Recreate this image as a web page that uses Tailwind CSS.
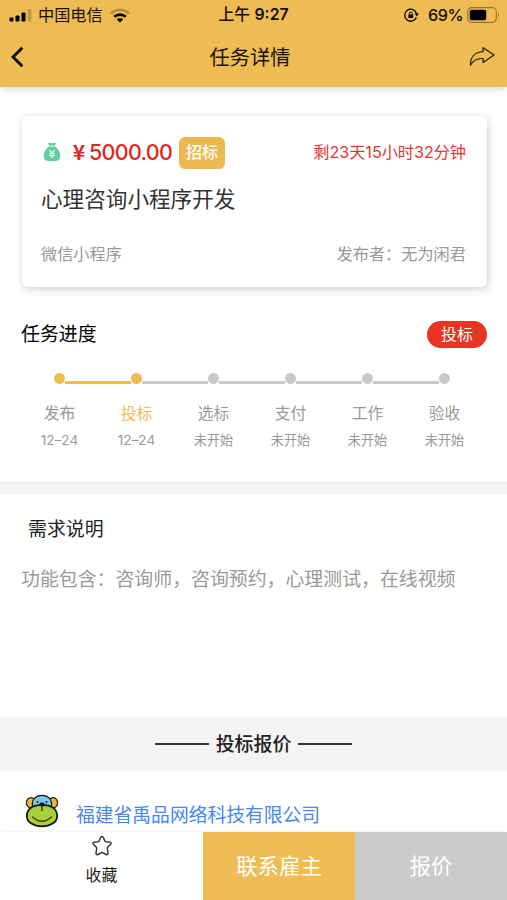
<!DOCTYPE html>
<html lang="zh-CN">
<head>
<meta charset="utf-8">
<title>任务详情</title>
<script src="https://cdn.jsdelivr.net/npm/@tailwindcss/browser@4"></script>
</head>
<body class="w-[507px] h-[900px] overflow-hidden bg-white font-['Inter','Noto_Sans_CJK_SC',sans-serif] text-[#222]">
<div class="flex flex-col h-[900px]">
  <header class="h-[87px] shrink-0 bg-[#efbc54] shadow-[0_2px_7px_rgba(0,0,0,0.16)] text-[#151005]">
    <div class="h-[30px] grid grid-cols-3 items-center leading-[30px]">
      <div class="flex items-center pl-[9px]">
        <svg class="w-[24px] h-[13px]" viewBox="0 0 24 13"><g fill="#000"><rect x="0.5" y="8.5" width="4" height="4" rx="1"/><rect x="6.5" y="6.5" width="4" height="6" rx="1"/><rect x="12.5" y="3.5" width="4" height="9" rx="1"/><rect x="18.5" y="0" width="4" height="12.5" rx="1" opacity=".2"/></g></svg>
        <span class="ml-[5px] text-[16.2px] h-[30px] whitespace-nowrap">中国电信</span>
        <svg class="ml-[7px] w-[20px] h-[15px]" viewBox="0 0 20 15" fill="none" stroke="#000" stroke-width="2.8"><path d="M1.2 5.4C6 .6 14 .6 18.8 5.4" opacity=".25"/><path d="M4.2 8.8C7.4 5.8 12.6 5.8 15.8 8.8"/><path d="M10 14.4 6.6 11.3C8.6 9.9 11.4 9.9 13.4 11.3Z" fill="#000" stroke="none"/></svg>
      </div>
      <div class="text-center text-[15.8px] h-[30px] whitespace-nowrap"><span class="font-medium">上午</span> <span class="font-semibold">9:27</span></div>
      <div class="flex items-center justify-end pr-[7px]">
        <svg class="w-[15px] h-[14px]" viewBox="0 0 15 14" fill="none" stroke="#000" stroke-width="1.3"><path d="M12.3 5A6 6 0 1 0 12.3 9.400"/><path d="M10.600 5.200h4.200l-2 3.400z" fill="#000" stroke="none"/><rect x="4.400" y="6.400" width="4.800" height="3.600" rx=".6" fill="#000" stroke="none"/><path d="M5.400 6.700V5.400a1.400 1.400 0 0 1 2.800 0v1.300" stroke-width="1"/></svg>
        <span class="ml-[9px] text-[16.2px] font-medium h-[30px] tracking-[-0.5px]">69%</span>
        <svg class="ml-[4px] w-[33px] h-[16px]" viewBox="0 0 33 16"><rect x=".7" y=".7" width="28.6" height="14.6" rx="4" fill="none" stroke="#000" stroke-opacity=".38" stroke-width="1.2"/><rect x="2.7" y="2.8" width="16.5" height="10.4" rx="2" fill="#000"/><path d="M31 5.5q2 2.5 0 5z" fill="#000" opacity=".4"/></svg>
      </div>
    </div>
    <div class="h-[54px] grid grid-cols-[1fr_auto_1fr] items-center pl-[11px] pr-[18px]">
      <svg class="w-[26px] h-[22px] -ml-px" viewBox="0 0 26 22" fill="none" stroke="#000" stroke-width="2.8"><path d="M12.300 1.800 3 11l9.300 9.200"/></svg>
      <h1 class="text-[20.2px] leading-[56px] h-[54px]">任务详情</h1>
      <svg class="w-[26px] h-[22px] justify-self-end -mr-[6px]" viewBox="0 0 26 22" fill="none" stroke="#231a05" stroke-width="1.2" stroke-linejoin="round"><path d="M14.1 1.7 25 8.9 14.1 16.6V12.6C8.2 12 4.5 14.2 1.4 19.2 1.3 11.4 5.7 6 14.1 5.6Z"/></svg>
    </div>
  </header>

  <section class="mt-[29px] ml-[22px] w-[465px] h-[171px] shrink-0 rounded-[6px] bg-white shadow-[1px_2px_8px_rgba(0,0,0,0.2)] pl-[19px] pr-[21px] pt-[19px]">
    <div class="h-[34px] flex items-center">
      <svg class="ml-[2px] w-[18px] h-[20px]" viewBox="0 0 18 20"><path d="M5 1.2Q7 .1 9 1.2 11 .1 13 1.2L11.8 3.4H6.2Z" fill="#5fcf9d"/><path d="M6.1 4.6H11.9C16 7.4 17.4 11 17.2 14.5 17 18 15.2 19.2 9 19.2S1 18 .8 14.5C.6 11 2 7.4 6.1 4.6Z" fill="#5fcf9d"/><path d="M6.5 8.2 9 11.4 11.5 8.2M9 11.4V16M6.3 11.6H11.7M6.3 13.7H11.7" stroke="#e9fff5" stroke-width="1.3" fill="none"/></svg>
      <div class="ml-[11px] flex items-center h-[34px] text-[#e2281e] font-medium"><span class="w-[14px] h-[34px] leading-[32px] text-center text-[21px] font-bold font-['Noto_Sans_CJK_SC',sans-serif]">¥</span><span class="ml-[3px] w-[83px] text-[21.5px] h-[34px] leading-[34px] whitespace-nowrap tracking-[-0.7px]">5000.00</span></div>
      <span class="ml-[7px] mt-px w-[46px] h-[32px] leading-[31px] rounded-[6px] bg-[#edb850] text-center text-[16px] text-white font-medium">招标</span>
      <span class="ml-auto h-[34px] leading-[34px] text-[16.2px] tracking-[-0.05px] text-[#e2382f]">剩23天15小时32分钟</span>
    </div>
    <h2 class="mt-[12px] h-[36px] leading-[36px] text-[21.6px] text-[#333]">心理咨询小程序开发</h2>
    <div class="mt-[22px] h-[30px] leading-[30px] flex justify-between text-[16.2px] text-[#999]"><span>微信小程序</span><span>发布者：无为闲君</span></div>
  </section>

  <section class="shrink-0 h-[194px] pt-[31px]">
    <div class="h-[32px] flex items-center justify-between pl-[21px] pr-[20px]">
      <h3 class="text-[18.9px] h-[32px] leading-[34px] text-black">任务进度</h3>
      <span class="w-[60px] h-[27px] leading-[27px] rounded-full bg-[#ea3323] text-center text-[16px] text-white">投标</span>
    </div>
    <div class="mt-[22px] ml-[21px] w-[462px] grid grid-cols-6 text-center text-[#999]">
      <div class="flex flex-col items-center">
        <div class="h-[12px] w-full flex items-center"><i class="flex-1"></i><i class="w-[11px] h-[11px] rounded-full bg-[#efba50]"></i><i class="flex-1 h-[3px] mt-[8px] bg-[#efba50]"></i></div>
        <p class="mt-[18px] h-[24px] leading-[24px] text-[15.8px]">发布</p><p class="mt-[3px] h-[22px] leading-[22px] text-[13.6px]">12–24</p>
      </div>
      <div class="flex flex-col items-center">
        <div class="h-[12px] w-full flex items-center"><i class="flex-1 h-[3px] mt-[8px] bg-[#efba50]"></i><i class="w-[11px] h-[11px] rounded-full bg-[#efba50]"></i><i class="flex-1 h-[3px] mt-[8px] bg-[#c9c9c9]"></i></div>
        <p class="mt-[18px] h-[24px] leading-[24px] text-[15.8px] text-[#efba50]">投标</p><p class="mt-[3px] h-[22px] leading-[22px] text-[13.6px]">12–24</p>
      </div>
      <div class="flex flex-col items-center">
        <div class="h-[12px] w-full flex items-center"><i class="flex-1 h-[3px] mt-[8px] bg-[#c9c9c9]"></i><i class="w-[11px] h-[11px] rounded-full bg-[#c9c9c9]"></i><i class="flex-1 h-[3px] mt-[8px] bg-[#c9c9c9]"></i></div>
        <p class="mt-[18px] h-[24px] leading-[24px] text-[15.8px]">选标</p><p class="mt-[3px] h-[22px] leading-[22px] text-[13.2px]">未开始</p>
      </div>
      <div class="flex flex-col items-center">
        <div class="h-[12px] w-full flex items-center"><i class="flex-1 h-[3px] mt-[8px] bg-[#c9c9c9]"></i><i class="w-[11px] h-[11px] rounded-full bg-[#c9c9c9]"></i><i class="flex-1 h-[3px] mt-[8px] bg-[#c9c9c9]"></i></div>
        <p class="mt-[18px] h-[24px] leading-[24px] text-[15.8px]">支付</p><p class="mt-[3px] h-[22px] leading-[22px] text-[13.2px]">未开始</p>
      </div>
      <div class="flex flex-col items-center">
        <div class="h-[12px] w-full flex items-center"><i class="flex-1 h-[3px] mt-[8px] bg-[#c9c9c9]"></i><i class="w-[11px] h-[11px] rounded-full bg-[#c9c9c9]"></i><i class="flex-1 h-[3px] mt-[8px] bg-[#c9c9c9]"></i></div>
        <p class="mt-[18px] h-[24px] leading-[24px] text-[15.8px]">工作</p><p class="mt-[3px] h-[22px] leading-[22px] text-[13.2px]">未开始</p>
      </div>
      <div class="flex flex-col items-center">
        <div class="h-[12px] w-full flex items-center"><i class="flex-1 h-[3px] mt-[8px] bg-[#c9c9c9]"></i><i class="w-[11px] h-[11px] rounded-full bg-[#c9c9c9]"></i><i class="flex-1"></i></div>
        <p class="mt-[18px] h-[24px] leading-[24px] text-[15.8px]">验收</p><p class="mt-[3px] h-[22px] leading-[22px] text-[13.2px]">未开始</p>
      </div>
    </div>
  </section>

  <div class="h-[13px] shrink-0 bg-[#f5f5f5]"></div>

  <section class="h-[223px] shrink-0 pt-[20px]">
    <h3 class="pl-[28px] h-[32px] leading-[32px] text-[18.9px]">需求说明</h3>
    <p class="mt-[18px] pl-[21px] h-[32px] leading-[32px] text-[18.9px] text-[#999] whitespace-nowrap">功能包含：咨询师，咨询预约，心理测试，在线视频</p>
  </section>

  <div class="h-[54px] shrink-0 bg-[#f4f4f4] flex items-center justify-center gap-[7px]">
    <i class="w-[54px] h-[1.5px] bg-[#333]"></i>
    <h3 class="h-[54px] leading-[56px] text-[18.9px] font-medium">投标报价</h3>
    <i class="w-[54px] h-[1.5px] bg-[#333]"></i>
  </div>

  <section class="h-[61px] shrink-0 flex pl-[25px] pt-[23px]">
    <svg class="w-[34px] h-[34px]" viewBox="0 0 34 34" stroke="#17180c" stroke-width="1.2"><ellipse cx="6" cy="8.800" rx="4.600" ry="5.200" fill="#eeb544"/><ellipse cx="28" cy="8.800" rx="4.600" ry="5.200" fill="#eeb544"/><path d="M7.500 13C6.500 5 11 1.400 17 1.400S27.500 5 26.500 13Z" fill="#77c9ef"/><path d="M17 11.500C22 10 32.200 13 32.200 22 32.200 28.500 25 32.300 17 32.300S1.800 28.500 1.800 22C1.800 13 12 10 17 11.500Z" fill="#a9cf3a" stroke-width="1.800"/><path d="M7 22.500Q17 32 27 22.500" fill="none" stroke="#35440d"/><path d="M17 10V17" fill="none"/><ellipse cx="17" cy="9.800" rx="2.600" ry="1.400" fill="#111" stroke="none"/><circle cx="12.500" cy="8" r=".9" fill="#111" stroke="none"/><circle cx="21.500" cy="8" r=".9" fill="#111" stroke="none"/></svg>
    <a class="ml-[17px] mt-[6px] h-[32px] leading-[32px] text-[18.8px] text-[#4589ef]">福建省禹品网络科技有限公司</a>
  </section>

  <footer class="h-[68px] shrink-0 flex bg-white shadow-[0_0_2px_rgba(0,0,0,0.1)]">
    <div class="w-[203px] flex flex-col items-center pt-[3px]">
      <svg class="w-[22px] h-[22px]" viewBox="0 0 22 22" fill="none" stroke="#333" stroke-width="1.4" stroke-linejoin="round"><path d="M9.800 2.200Q11 .7 12.200 2.200L14.200 6.600 19 7.300Q21 7.900 19.700 9.300L16.200 12.700 17 18.200Q17 20.200 15.200 19.500L11 17.400 6.800 19.500Q5 20.200 5 18.200L5.800 12.700 2.300 9.300Q1 7.900 3 7.300L7.800 6.600Z"/></svg>
      <span class="mt-[7px] h-[24px] leading-[24px] text-[15.9px]">收藏</span>
    </div>
    <button class="w-[152px] bg-[#efbc54] text-white text-[21.4px] h-[68px] leading-[68px]">联系雇主</button>
    <button class="w-[152px] bg-[#cbcbcb] text-white text-[21.4px] h-[68px] leading-[68px]">报价</button>
  </footer>
</div>
</body>
</html>
